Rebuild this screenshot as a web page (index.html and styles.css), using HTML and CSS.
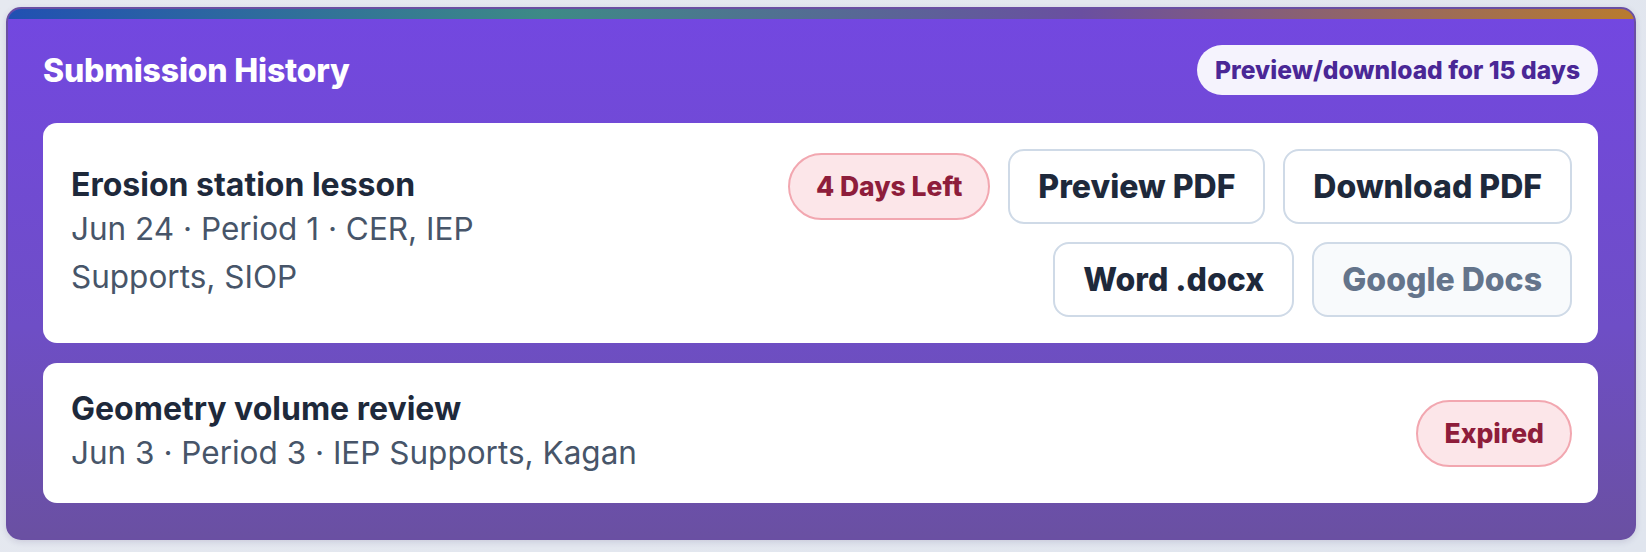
FILE: index.html
```html
<!DOCTYPE html>
<html lang="en">
<head>
    <meta charset="UTF-8">
    <meta name="viewport" content="width=device-width, initial-scale=1.0">
    <title>Submission History</title>
    <link rel="stylesheet" href="styles.css">
</head>
<body>
    <div class="panel">
        <div class="stripe"></div>
        <div class="panel-body">
            <div class="panel-head">
                <h2>Submission History</h2>
                <span class="notice">Preview/download for 15 days</span>
            </div>

            <div class="card">
                <div class="info">
                    <div class="lesson-title">Erosion station lesson</div>
                    <div class="meta">Jun 24 · Period 1 · CER, IEP Supports, SIOP</div>
                </div>
                <div class="actions">
                    <span class="pill">4 Days Left</span>
                    <button class="btn">Preview PDF</button>
                    <button class="btn">Download PDF</button>
                    <button class="btn">Word .docx</button>
                    <button class="btn muted">Google Docs</button>
                </div>
            </div>

            <div class="card">
                <div class="info">
                    <div class="lesson-title">Geometry volume review</div>
                    <div class="meta">Jun 3 · Period 3 · IEP Supports, Kagan</div>
                </div>
                <div class="actions">
                    <span class="pill">Expired</span>
                </div>
            </div>
        </div>
    </div>
</body>
</html>
```

FILE: styles.css
```css
body {
    margin: 0;
    padding: 7px 10px 13px 6px;
    font-family: Inter, "Noto Sans", sans-serif;
    background: linear-gradient(135deg, #e6e9f0, #e0e5ee);
}

.panel {
    border: 2px solid #6a4fa3;
    border-radius: 15px;
    overflow: hidden;
    background: linear-gradient(180deg, #7347e1 0%, #6e4ec6 60%, #6a50a2 100%);
    box-shadow: 0 2px 6px rgba(60, 50, 110, 0.15);
}

.stripe {
    height: 10px;
    background: linear-gradient(90deg, #2150b2 0%, #3d8a86 33%, #6a4fa0 66%, #b97b2e 100%);
}

.panel-body {
    padding: 26px 36px 35px 35px;
}

.panel-head {
    display: flex;
    justify-content: space-between;
    align-items: center;
    margin-bottom: 28px;
}

.panel-head h2 {
    margin: 0;
    color: #fff;
    font-size: 32px;
    font-weight: 800;
    letter-spacing: -0.2px;
}

.notice {
    padding: 10px 18px;
    border-radius: 999px;
    background-color: #f5f3fd;
    color: #4a2796;
    font-size: 24.6px;
    line-height: 30px;
    font-weight: 800;
}

.card {
    display: flex;
    justify-content: space-between;
    align-items: center;
    gap: 24px;
    padding: 26px 26px 26px 28px;
    margin-bottom: 20px;
    background-color: #fff;
    border-radius: 14px;
}

.card:last-child {
    margin-bottom: 0;
}

.lesson-title {
    color: #1e293b;
    font-size: 32px;
    line-height: 40px;
    font-weight: 700;
}

.meta {
    color: #475569;
    font-size: 31.5px;
    line-height: 48px;
}

.actions {
    display: flex;
    flex-wrap: wrap;
    justify-content: flex-end;
    align-items: center;
    gap: 18px;
}

.pill {
    padding: 15px 26px;
    border: 2px solid #f2a7b0;
    border-radius: 999px;
    background-color: #fce6e9;
    color: #8e1d3b;
    font-size: 26.5px;
    line-height: 33px;
    font-weight: 800;
}

.btn {
    padding: 15.5px 28px;
    border: 2px solid #cfdae7;
    border-radius: 16px;
    background-color: #fff;
    color: #1e293b;
    font-family: inherit;
    font-size: 32px;
    line-height: 40px;
    font-weight: 800;
    cursor: pointer;
}

.btn.muted {
    background-color: #f8fafc;
    color: #64748b;
}
```
